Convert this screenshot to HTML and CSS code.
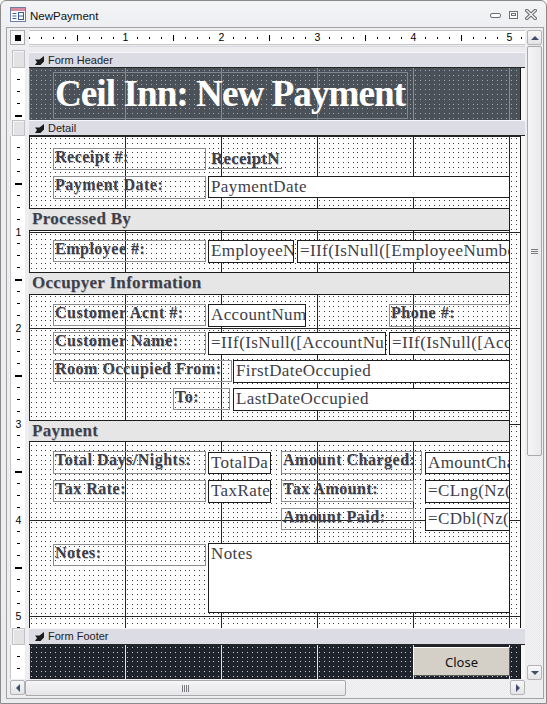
FILE: index.html
```html
<!DOCTYPE html>
<html>
<head>
<meta charset="utf-8">
<link rel="stylesheet" href="styles.css">
</head>
<body>
<div class="window">
  <div class="titlebar">
    <svg class="appicon" width="16" height="15" viewBox="0 0 16 15">
      <rect x="0.5" y="0.5" width="15" height="14" fill="#fff" stroke="#6d7ea6"/>
      <rect x="1" y="1" width="14" height="3" fill="#d98aa0"/>
      <path d="M2.5 6.5h4M2.5 9h4M2.5 11.5h4" stroke="#3d5c9c" fill="none"/>
      <rect x="8.5" y="5.5" width="5" height="7" fill="none" stroke="#3d5c9c"/>
      <path d="M8.5 9h5" stroke="#3d5c9c"/>
    </svg>
    <span class="title">NewPayment</span>
    <div class="winctl">
      <svg width="11" height="11" viewBox="0 0 11 11"><rect x="0.5" y="4.5" width="10" height="4" rx="1.5" fill="#fff" stroke="#6f6f6f"/></svg>
      <svg width="9" height="11" viewBox="0 0 9 11"><rect x="0.5" y="2.5" width="8" height="7" fill="#fff" stroke="#6f6f6f"/><rect x="2.5" y="4.5" width="4" height="2" fill="none" stroke="#6f6f6f"/></svg>
      <svg width="12" height="11" viewBox="0 0 12 11"><path d="M1.8 1.5L10.2 9.5M10.2 1.5L1.8 9.5" stroke="#6f6f6f" stroke-width="3.4" stroke-linecap="square"/><path d="M1.8 1.5L10.2 9.5M10.2 1.5L1.8 9.5" stroke="#fff" stroke-width="1.2" stroke-linecap="square"/></svg>
    </div>
  </div>

  <div class="frame">
    <div class="corner"><i></i></div>

    <div class="hruler">
      <div class="hcell"><span class="num">1</span></div>
      <div class="hcell"><span class="num">2</span></div>
      <div class="hcell"><span class="num">3</span></div>
      <div class="hcell"><span class="num">4</span></div>
      <div class="hcell"><span class="num">5</span></div>
    </div>

    <div class="vscroll">
      <div class="sbtn"><i class="tri up"></i></div>
      <div class="vthumb"><i class="vgrip"></i></div>
      <div class="vtrack"></div>
      <div class="sbtn"><i class="tri down"></i></div>
    </div>

    <div class="vruler">
      <div class="rgap"></div>
      <div class="sel sel-head"></div>
      <div class="rseg seg-head"></div>
      <div class="sel sel-detail"></div>
      <div class="rseg seg-detail">
        <div class="vcell"><span class="vnum">1</span></div>
        <div class="vcell"><span class="vnum">2</span></div>
        <div class="vcell"><span class="vnum">3</span></div>
        <div class="vcell"><span class="vnum">4</span></div>
        <div class="vcell"><span class="vnum">5</span></div>
      </div>
      <div class="sel sel-foot"></div>
      <div class="rseg seg-foot"></div>
    </div>

    <div class="design">
      <div class="topgap"></div>
      <div class="secbar bar-head">
        <svg class="secicon" width="9" height="9" viewBox="0 0 9 9"><path d="M9 0L9 5.5L5.5 9L0 9L2 6L0 3.5L4.5 3.5Z" fill="#1b1b1b"/></svg>
        <span>Form Header</span>
      </div>
      <div class="section">
        <div class="canvas c-head">
          <div class="ctl title-lbl">Ceil Inn: New Payment</div>
        </div>
      </div>
      <div class="secbar bar-detail">
        <svg class="secicon" width="9" height="9" viewBox="0 0 9 9"><path d="M9 0L9 5.5L5.5 9L0 9L2 6L0 3.5L4.5 3.5Z" fill="#1b1b1b"/></svg>
        <span>Detail</span>
      </div>
      <div class="section">
        <div class="canvas c-detail">
          <div class="ctl lbl l-receipt">Receipt #:</div>
          <div class="ctl rcpt">ReceiptN</div>
          <div class="ctl lbl l-paydate">Payment Date:</div>
          <div class="ctl tb t-paydate">PaymentDate</div>

          <div class="ctl band b-proc">Processed By</div>
          <div class="ctl lbl l-emp">Employee #:</div>
          <div class="ctl tb t-emp">EmployeeN</div>
          <div class="ctl tb t-empname">=IIf(IsNull([EmployeeNumbe</div>

          <div class="ctl band b-occ">Occupyer Information</div>
          <div class="ctl lbl l-acnt">Customer Acnt #:</div>
          <div class="ctl tb t-acnt">AccountNum</div>
          <div class="ctl lbl l-phone">Phone #:</div>
          <div class="ctl lbl l-cname">Customer Name:</div>
          <div class="ctl tb t-cname">=IIf(IsNull([AccountNu</div>
          <div class="ctl tb t-cphone">=IIf(IsNull([Acco</div>
          <div class="ctl lbl l-room">Room Occupied From:</div>
          <div class="ctl tb t-first">FirstDateOccupied</div>
          <div class="ctl lbl l-to">To:</div>
          <div class="ctl tb t-last">LastDateOccupied</div>

          <div class="ctl band b-pay">Payment</div>
          <div class="ctl lbl l-total">Total Days/Nights:</div>
          <div class="ctl tb t-total">TotalDa</div>
          <div class="ctl lbl l-charged">Amount Charged:</div>
          <div class="ctl tb t-charged">AmountCha</div>
          <div class="ctl lbl l-taxrate">Tax Rate:</div>
          <div class="ctl tb t-taxrate">TaxRate</div>
          <div class="ctl lbl l-taxamt">Tax Amount:</div>
          <div class="ctl tb t-taxamt">=CLng(Nz([</div>
          <div class="ctl lbl l-paid">Amount Paid:</div>
          <div class="ctl tb t-paid">=CDbl(Nz([</div>

          <div class="ctl lbl l-notes">Notes:</div>
          <div class="ctl tb t-notes">Notes</div>
        </div>
      </div>
      <div class="secbar bar-foot">
        <svg class="secicon" width="9" height="9" viewBox="0 0 9 9"><path d="M9 0L9 5.5L5.5 9L0 9L2 6L0 3.5L4.5 3.5Z" fill="#1b1b1b"/></svg>
        <span>Form Footer</span>
      </div>
      <div class="section">
        <div class="canvas c-foot">
          <div class="ctl closebtn">Close</div>
        </div>
      </div>
    </div>

    <div class="hscroll">
      <div class="sbtn"><i class="tri left"></i></div>
      <div class="hthumb"><i class="hgrip"></i></div>
      <div class="htrack"></div>
      <div class="sbtn"><i class="tri right"></i></div>
    </div>
  </div>
</div>
</body>
</html>
```

FILE: styles.css
```css
* { box-sizing: border-box; }
html, body { margin: 0; padding: 0; background: #fff; }

.window {
  width: 547px;
  height: 704px;
  border: 1px solid #8a8a8a;
  border-radius: 6px 6px 0 0;
  background: linear-gradient(#f3f4f6, #eceef1 30px, #ebecef);
  font-family: "Liberation Sans", Arial, sans-serif;
}

/* ---------- title bar ---------- */
.titlebar {
  height: 26px;
  display: flex;
  align-items: flex-start;
  padding-left: 9px;
}
.appicon { margin-top: 6px; flex: none; }
.title {
  margin-left: 4px;
  margin-top: 8px;
  font-size: 11.5px;
  line-height: 14px;
  color: #111;
}
.winctl {
  margin-left: auto;
  margin-top: 8px;
  margin-right: 9px;
  display: flex;
  align-items: flex-start;
}
.winctl svg { display: block; }
.winctl svg:nth-child(2) { margin-left: 8px; }
.winctl svg:nth-child(3) { margin-left: 7px; }

/* ---------- inner frame ---------- */
.frame {
  margin-left: 5px;
  width: 538px;
  border: 1px solid #a3a3a3;
  padding: 2px 1px 2px 3px;
  display: grid;
  grid-template-columns: 15px 4px 496px 2px 15px;
  grid-template-rows: 15px 1px 633px 1px 16px;
  background: #eeeef0;
}

.corner {
  grid-column: 1; grid-row: 1;
  border: 1px solid #a9a9a9;
  background: #f7f7f7;
  display: flex;
  align-items: center;
  justify-content: center;
}
.corner i { width: 6px; height: 6px; background: #000; display: block; }

/* horizontal ruler */
.hruler {
  grid-column: 3; grid-row: 1;
  display: flex;
  background:
    linear-gradient(90deg, transparent 0 47px, #000 47px 48px, transparent 48px) 1px 5px / 96px 6px repeat-x,
    linear-gradient(90deg, transparent 0 11px, #000 11px 12px, transparent 12px) 1px 7px / 12px 2px repeat-x,
    #fff;
  box-shadow: inset 0 1px #c6c6c6, inset 0 -1px #c6c6c6;
}
.hcell {
  width: 96px;
  flex: none;
  display: flex;
  justify-content: flex-end;
  align-items: center;
}
.num {
  width: 9px;
  margin-right: -5px;
  background: #fff;
  text-align: center;
  font-size: 10.5px;
  line-height: 11px;
  color: #000;
}

/* vertical ruler */
.vruler {
  grid-column: 1; grid-row: 3;
  display: flex;
  flex-direction: column;
}
.rgap { height: 4px; flex: none; }
.sel {
  flex: none;
  margin-left: 2px;
  background: #e3e3e6;
  border: 1px solid #c2c2c6;
  box-shadow: inset 1px 1px #f6f6f6;
}
.sel-head { height: 18px; }
.sel-detail { height: 16px; }
.sel-foot { height: 17px; }
.rseg {
  flex: none;
  background:
    linear-gradient(180deg, transparent 0 47px, #000 47px 49px, transparent 49px) 5px 0 / 7px 96px repeat-y,
    linear-gradient(180deg, transparent 0 11px, #000 11px 13px, transparent 13px) 7px 0 / 3px 12px repeat-y,
    #fff;
  box-shadow: inset 1px 0 #c8c8c8;
}
.seg-head { height: 52px; }
.seg-detail { height: 492px; }
.seg-foot { height: 34px; }
.vcell {
  height: 96px;
  display: flex;
  align-items: flex-end;
  justify-content: center;
  padding-left: 2px;
}
.vnum {
  width: 8px;
  height: 11px;
  margin-bottom: -6px;
  background: #fff;
  text-align: center;
  font-size: 10.5px;
  line-height: 11px;
  color: #000;
}

/* ---------- scrollbars ---------- */
.sbtn {
  flex: none;
  width: 15px;
  height: 15px;
  border: 1px solid #b4b4b8;
  border-radius: 2px;
  background: linear-gradient(#f8f8f8, #e4e4e6);
  display: flex;
  align-items: center;
  justify-content: center;
}
.tri { display: block; width: 0; height: 0; border-style: solid; border-color: transparent; }
.tri.up { border-width: 0 4px 4px 4px; border-bottom-color: #3f4d6e; }
.tri.down { border-width: 4px 4px 0 4px; border-top-color: #3f4d6e; }
.tri.left { border-width: 4px 4px 4px 0; border-right-color: #3f4d6e; }
.tri.right { border-width: 4px 0 4px 4px; border-left-color: #3f4d6e; }

.vscroll {
  grid-column: 5; grid-row: 1 / 5;
  display: flex;
  flex-direction: column;
  background: #e9e9eb;
}
.vthumb {
  flex: none;
  height: 410px;
  margin-top: 1px;
  border: 1px solid #a9a9ad;
  border-radius: 2px;
  background: linear-gradient(90deg, #f5f5f6, #e9e9eb);
  display: flex;
  align-items: center;
  justify-content: center;
}
.vgrip {
  display: block;
  width: 7px;
  height: 5px;
  background: repeating-linear-gradient(180deg, #7b7b80 0 1px, transparent 1px 2px);
}
.vtrack {
  flex: 1;
  background: repeating-conic-gradient(#e6e6e8 0 25%, #f6f6f7 0 50%) 0 0 / 2px 2px;
}

.hscroll {
  grid-column: 1 / 4; grid-row: 5;
  display: flex;
  background: repeating-conic-gradient(#e6e6e8 0 25%, #f6f6f7 0 50%) 0 0 / 2px 2px;
}
.hthumb {
  flex: none;
  width: 321px;
  border: 1px solid #a9a9ad;
  border-radius: 2px;
  background: linear-gradient(#f5f5f6, #e6e6e8);
  display: flex;
  align-items: center;
  justify-content: center;
}
.hgrip {
  display: block;
  width: 7px;
  height: 7px;
  background: repeating-linear-gradient(90deg, #7b7b80 0 1px, transparent 1px 2px);
}
.htrack { flex: 1; }

/* ---------- design surface ---------- */
.design {
  grid-column: 3; grid-row: 3;
  display: flex;
  flex-direction: column;
  background: #f4f4f6;
}
.topgap {
  height: 6px;
  flex: none;
  background: #ececf0;
  box-shadow: inset 0 1px #d6d6dc;
}
.secbar {
  flex: none;
  display: flex;
  align-items: center;
  padding-left: 6px;
  background: #dcdce4;
  border-top: 1px solid #f7f7fb;
  border-bottom: 1px solid #262626;
  font-size: 11px;
  color: #222;
}
.secbar span { margin-left: 4px; line-height: 13px; }
.secicon { display: block; flex: none; }
.bar-head { height: 16px; }
.bar-detail { height: 16px; }
.bar-foot { height: 17px; }

.section {
  flex: none;
  display: flex;
  background: #f6f6f6;
}
.canvas {
  position: relative;
  width: 492px;
  flex: none;
  border-right: 1px solid #111;
  overflow: hidden;
}

.c-head {
  height: 52px;
  background:
    linear-gradient(90deg, #878d93 0 1px, transparent 1px) 0 0 / 96px 100%,
    linear-gradient(90deg, #4a5158 0 2px, transparent 2px 3px, #4a5158 3px 7px, transparent 7px 8px, #4a5158 8px 12px, transparent 12px 13px, #4a5158 13px 16px, transparent 16px 17px, #4a5158 17px 21px, transparent 21px 22px, #4a5158 22px) 0 0 / 24px 24px,
    linear-gradient(180deg, #4a5158 0 2px, #a3a9af 2px 3px, #4a5158 3px 7px, #a3a9af 7px 8px, #4a5158 8px 12px, #a3a9af 12px 13px, #4a5158 13px 16px, #a3a9af 16px 17px, #4a5158 17px 21px, #a3a9af 21px 22px, #4a5158 22px) 0 0 / 24px 24px,
    #4a5158;
}
.c-detail {
  height: 492px;
  background:
    linear-gradient(90deg, #262626 0 1px, transparent 1px) 0 0 / 96px 100%,
    linear-gradient(180deg, #262626 0 1px, transparent 1px) 0 0 / 100% 96px,
    linear-gradient(90deg, #fff 0 2px, transparent 2px 3px, #fff 3px 7px, transparent 7px 8px, #fff 8px 12px, transparent 12px 13px, #fff 13px 16px, transparent 16px 17px, #fff 17px 21px, transparent 21px 22px, #fff 22px) 0 0 / 24px 24px,
    linear-gradient(180deg, #fff 0 2px, #3a3a3a 2px 3px, #fff 3px 7px, #3a3a3a 7px 8px, #fff 8px 12px, #3a3a3a 12px 13px, #fff 13px 16px, #3a3a3a 16px 17px, #fff 17px 21px, #3a3a3a 21px 22px, #fff 22px) 0 0 / 24px 24px,
    #fff;
}
.c-foot {
  height: 34px;
  background:
    linear-gradient(90deg, #e4e4e4 0 1px, transparent 1px) 0 0 / 96px 100%,
    linear-gradient(90deg, #1f232c 0 2px, transparent 2px 3px, #1f232c 3px 7px, transparent 7px 8px, #1f232c 8px 12px, transparent 12px 13px, #1f232c 13px 16px, transparent 16px 17px, #1f232c 17px 21px, transparent 21px 22px, #1f232c 22px) 0 0 / 24px 24px,
    linear-gradient(180deg, #1f232c 0 2px, #c9ccd2 2px 3px, #1f232c 3px 7px, #c9ccd2 7px 8px, #1f232c 8px 12px, #c9ccd2 12px 13px, #1f232c 13px 16px, #c9ccd2 16px 17px, #1f232c 17px 21px, #c9ccd2 21px 22px, #1f232c 22px) 0 0 / 24px 24px,
    #1f232c;
}

/* ---------- controls on the design canvas ---------- */
.ctl {
  position: absolute;
  white-space: nowrap;
  overflow: hidden;
}

.title-lbl {
  left: 24px; top: 4px; width: 355px; height: 47px;
  border: 1px solid #80878e;
  padding-left: 1px;
  font-family: "Liberation Serif", "Times New Roman", serif;
  font-weight: bold;
  font-size: 37px;
  line-height: 41px;
  letter-spacing: -0.9px;
  color: #fff;
  text-shadow: 0.6px 0 0 rgba(255, 210, 170, 0.35);
}

.lbl {
  border: 1px solid #8d8d8f;
  padding-left: 1px;
  overflow: visible;
  font-family: "Liberation Serif", "Times New Roman", serif;
  font-weight: bold;
  font-size: 16px;
  line-height: 16px;
  letter-spacing: 0.5px;
  color: #3f3f4a;
  text-shadow: 0.5px 0.5px 0 rgba(60, 60, 70, 0.3);
}
.tb {
  border: 1px solid #1c1c1c;
  background: #fff;
  padding-left: 2px;
  font-family: "Liberation Serif", "Times New Roman", serif;
  font-size: 17px;
  line-height: 19px;
  letter-spacing: 0.4px;
  color: #3e3e48;
}
.rcpt {
  left: 179px; top: 12px; width: 74px; height: 21px;
  border-bottom: 1px solid #7d7d80;
  padding-left: 3px;
  font-family: "Liberation Serif", "Times New Roman", serif;
  font-weight: bold;
  font-size: 17px;
  line-height: 21px;
  letter-spacing: 0.2px;
  color: #3f3f4a;
  text-shadow: 0.5px 0.5px 0 rgba(60, 60, 70, 0.3);
}
.band {
  left: 0; width: 481px;
  background: #e6e6e6;
  border: 1px solid #1c1c1c;
  border-left: none;
  padding-left: 3px;
  font-family: "Liberation Serif", "Times New Roman", serif;
  font-weight: bold;
  font-size: 17px;
  line-height: 19px;
  letter-spacing: 0.3px;
  color: #3f3f4a;
  text-shadow: 0.5px 0.5px 0 rgba(60, 60, 70, 0.3);
}
.b-proc { top: 72px; height: 23px; }
.b-occ { top: 136px; height: 23px; }
.b-pay { top: 284px; height: 22px; }

.l-receipt { left: 24px; top: 12px; width: 153px; height: 22px; }
.l-paydate { left: 24px; top: 40px; width: 153px; height: 23px; }
.l-emp { left: 24px; top: 104px; width: 153px; height: 22px; }
.l-acnt { left: 24px; top: 168px; width: 153px; height: 22px; }
.l-phone { left: 360px; top: 168px; width: 121px; height: 23px; }
.l-cname { left: 24px; top: 196px; width: 153px; height: 22px; }
.l-room { left: 24px; top: 224px; width: 179px; height: 22px; }
.l-to { left: 144px; top: 252px; width: 57px; height: 22px; }
.l-total { left: 24px; top: 315px; width: 153px; height: 23px; }
.l-charged { left: 252px; top: 315px; width: 141px; height: 23px; }
.l-taxrate { left: 24px; top: 344px; width: 153px; height: 22px; }
.l-taxamt { left: 252px; top: 344px; width: 133px; height: 22px; }
.l-paid { left: 252px; top: 372px; width: 133px; height: 22px; }
.l-notes { left: 24px; top: 408px; width: 153px; height: 22px; }

.t-paydate { left: 179px; top: 40px; width: 302px; height: 22px; }
.t-emp { left: 179px; top: 104px; width: 86px; height: 23px; }
.t-empname { left: 268px; top: 104px; width: 213px; height: 23px; }
.t-acnt { left: 179px; top: 168px; width: 98px; height: 23px; }
.t-cname { left: 179px; top: 196px; width: 178px; height: 23px; }
.t-cphone { left: 360px; top: 196px; width: 121px; height: 23px; }
.t-first { left: 204px; top: 224px; width: 277px; height: 23px; }
.t-last { left: 204px; top: 252px; width: 277px; height: 23px; }
.t-total { left: 179px; top: 316px; width: 63px; height: 22px; }
.t-charged { left: 396px; top: 316px; width: 85px; height: 22px; }
.t-taxrate { left: 179px; top: 344px; width: 63px; height: 23px; }
.t-taxamt { left: 396px; top: 344px; width: 85px; height: 23px; }
.t-paid { left: 396px; top: 372px; width: 85px; height: 23px; }
.t-notes { left: 179px; top: 407px; width: 302px; height: 70px; }

.closebtn {
  left: 384px; top: 2px; width: 97px; height: 29px;
  background: #d4d0c8;
  border: 1px solid;
  border-color: #fff #5a5a5a #5a5a5a #fff;
  display: flex;
  align-items: center;
  justify-content: center;
  font-family: "Noto Sans", "Liberation Sans", sans-serif;
  font-size: 13px;
  color: #111;
}
```
